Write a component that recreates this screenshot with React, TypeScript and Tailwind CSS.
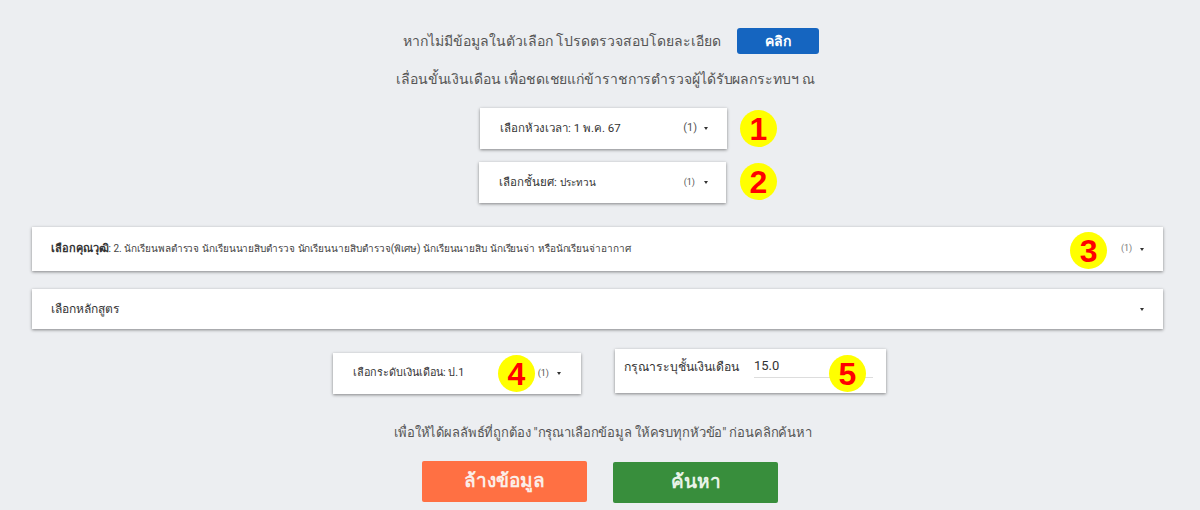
const font = { fontFamily: "Roboto, 'Noto Sans', 'Liberation Sans', sans-serif" };

function Caret({ gap }: { gap: string }) {
  return <span className={`${gap} h-0 w-0 border-x-[2.5px] border-t-[3px] border-x-transparent border-t-[#333]`} />;
}

function Badge({ n, className }: { n: number; className: string }) {
  return (
    <span
      className={`absolute flex h-[37px] w-[37px] items-center justify-center rounded-full bg-[#ffff00] text-[32px] font-bold text-[#ff0000] [font-family:'Liberation_Sans',sans-serif] ${className}`}
    >
      {n}
    </span>
  );
}

const card = "relative flex items-center bg-white shadow-[0_1px_3px_rgba(0,0,0,0.45)]";

export default function App() {
  return (
    <div className="flex h-[510px] w-[1200px] flex-col items-center overflow-hidden bg-[#eceef1]" style={font}>
      <div className="mt-[28px] flex h-[26px] items-center text-[14px] text-[#555]">
        <span className="ml-[22px]">หากไม่มีข้อมูลในตัวเลือก โปรดตรวจสอบโดยละเอียด</span>
        <button className="ml-[16px] h-[26px] w-[82px] rounded-[3px] bg-[#1565c0] text-[14px] font-bold text-white">คลิก</button>
      </div>
      <p className="mt-[14px] ml-[11px] h-[22px] text-[14px] leading-[22px] tracking-[-0.1px] text-[#555]">
        เลื่อนขั้นเงินเดือน เพื่อชดเชยแก่ข้าราชการตำรวจผู้ได้รับผลกระทบฯ ณ
      </p>

      <div className={`${card} mt-[18px] ml-[7px] h-[41px] w-[247px] pl-[20px] text-[11.5px] text-[#333]`}>
        <span>เลือกห้วงเวลา: 1 พ.ค. 67</span>
        <span className="ml-auto text-[11px] text-[#555]">(1)</span>
        <Caret gap="ml-[7px]" />
        <span className="w-[19px]" />
        <Badge n={1} className="left-[260px] top-[2px]" />
      </div>
      <div className={`${card} mt-[13px] ml-[5px] h-[41px] w-[247px] pl-[20px] text-[11.5px] text-[#333]`}>
        <span>เลือกชั้นยศ: <span className="text-[10px]">ประทวน</span></span>
        <span className="ml-auto text-[9px] text-[#555]">(1)</span>
        <Caret gap="ml-[9px]" />
        <span className="w-[18px]" />
        <Badge n={2} className="left-[261px] top-[1px]" />
      </div>

      <div className={`${card} mt-[24px] mr-[5px] h-[44px] w-[1131px] pl-[19px] text-[10px] tracking-[-0.05px] text-[#444]`}>
        <span>
          <b className="text-[11px] text-[#333]">เลือกคุณวุฒิ</b>: 2. นักเรียนพลตำรวจ นักเรียนนายสิบตำรวจ นักเรียนนายสิบตำรวจ(พิเศษ) นักเรียนนายสิบ นักเรียนจ่า หรือนักเรียนจ่าอากาศ
        </span>
        <span className="ml-auto text-[9px] text-[#777]">(1)</span>
        <Caret gap="ml-[8px]" />
        <span className="w-[19px]" />
        <Badge n={3} className="left-[1038px] top-[5px]" />
      </div>
      <div className={`${card} mt-[18px] mr-[5px] h-[40px] w-[1131px] pl-[19px] text-[12px] text-[#333]`}>
        <span>เลือกหลักสูตร</span>
        <Caret gap="ml-auto" />
        <span className="w-[19px]" />
      </div>

      <div className="mt-[20px] ml-[19px] flex h-[45px] w-[553px] items-start justify-between">
        <div className={`${card} mt-[4px] h-[41px] w-[248px] pl-[20px] text-[10.8px] text-[#333]`}>
          <span>เลือกระดับเงินเดือน: ป.1</span>
          <span className="ml-auto text-[9px] text-[#555]">(1)</span>
          <Caret gap="ml-[8px]" />
          <span className="w-[20px]" />
          <Badge n={4} className="left-[165px] top-[2px]" />
        </div>
        <div className={`${card} h-[44px] w-[271px] pl-[9px] text-[12.2px] text-[#333]`}>
          <span className="mt-[9px] self-start font-medium leading-[18px]">กรุณาระบุชั้นเงินเดือน</span>
          <div className="mt-[9px] ml-[15px] h-[20px] w-[119px] self-start border-b border-[#ddd] text-[13px] leading-[16px]">15.0</div>
          <Badge n={5} className="left-[214px] top-[6px]" />
        </div>
      </div>

      <p className="mt-[28px] ml-[6px] h-[22px] text-[13px] leading-[22px] tracking-[-0.15px] text-[#555]">
        เพื่อให้ได้ผลลัพธ์ที่ถูกต้อง "กรุณาเลือกข้อมูล ให้ครบทุกหัวข้อ" ก่อนคลิกค้นหา
      </p>

      <div className="mt-[17px] flex items-start gap-[26px]">
        <button className="h-[41px] w-[165px] rounded-[2px] bg-[#ff7043] text-[19px] font-bold text-[#fbeee8]">ล้างข้อมูล</button>
        <button className="mt-[1px] h-[41px] w-[165px] rounded-[2px] bg-[#388e3c] text-[19px] font-bold text-[#e8f3e8]">ค้นหา</button>
      </div>
    </div>
  );
}
